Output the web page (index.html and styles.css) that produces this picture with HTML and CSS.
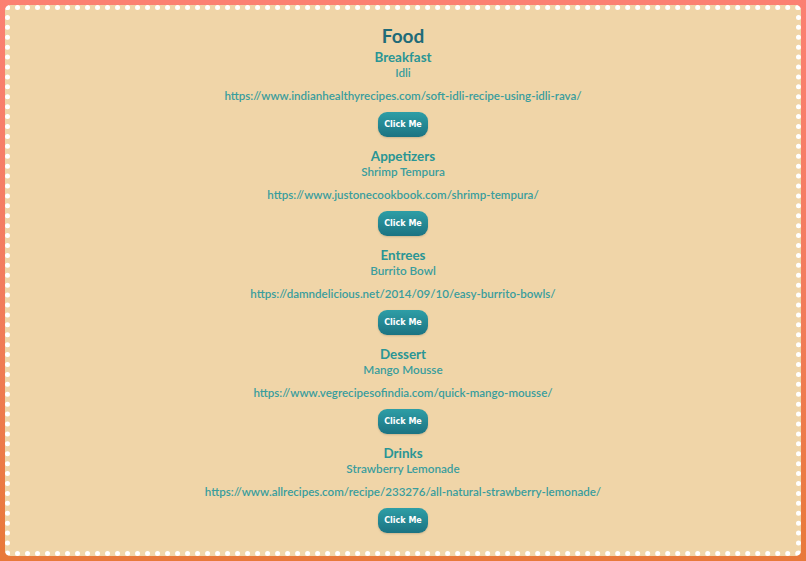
FILE: index.html
```html
<!DOCTYPE html>
<html lang="en">
<head>
<meta charset="utf-8">
<title>Food</title>
<link rel="stylesheet" href="styles.css">
</head>
<body>
<main class="card">
  <h1 class="title">Food</h1>
  <section class="meal">
    <h2 class="meal-name">Breakfast</h2>
    <p class="dish">Idli</p>
    <p class="link">https://www.indianhealthyrecipes.com/soft-idli-recipe-using-idli-rava/</p>
    <button class="btn" type="button">Click Me</button>
  </section>
  <section class="meal">
    <h2 class="meal-name">Appetizers</h2>
    <p class="dish">Shrimp Tempura</p>
    <p class="link">https://www.justonecookbook.com/shrimp-tempura/</p>
    <button class="btn" type="button">Click Me</button>
  </section>
  <section class="meal">
    <h2 class="meal-name">Entrees</h2>
    <p class="dish">Burrito Bowl</p>
    <p class="link">https://damndelicious.net/2014/09/10/easy-burrito-bowls/</p>
    <button class="btn" type="button">Click Me</button>
  </section>
  <section class="meal">
    <h2 class="meal-name">Dessert</h2>
    <p class="dish">Mango Mousse</p>
    <p class="link">https://www.vegrecipesofindia.com/quick-mango-mousse/</p>
    <button class="btn" type="button">Click Me</button>
  </section>
  <section class="meal">
    <h2 class="meal-name">Drinks</h2>
    <p class="dish">Strawberry Lemonade</p>
    <p class="link">https://www.allrecipes.com/recipe/233276/all-natural-strawberry-lemonade/</p>
    <button class="btn" type="button">Click Me</button>
  </section>
</main>
</body>
</html>
```
FILE: styles.css
```css
html {
  min-height: 100%;
  background: linear-gradient(to bottom, #fb8072 0%, #f27c5e 50%, #e8793a 100%);
}
body {
  margin: 5px;
  font-family: Lato, "Noto Sans", sans-serif;
}
.card {
  box-sizing: border-box;
  width: 796px;
  height: 551px;
  background: #f0d5a8;
  border: 5px dotted #ffffff;
  border-radius: 5px;
  padding: 14px 0 18px;
  display: flex;
  flex-direction: column;
  align-items: center;
  text-align: center;
}
.title {
  margin: 0 0 1px;
  font-size: 19px;
  line-height: 24px;
  font-weight: 700;
  color: #1f6b78;
}
.meal {
  display: flex;
  flex-direction: column;
  align-items: center;
  margin-bottom: 11px;
}
.meal:last-child {
  margin-bottom: 0;
}
.meal-name {
  margin: 0;
  font-size: 13.4px;
  line-height: 16px;
  font-weight: 700;
  color: #2a9595;
}
.dish {
  margin: 0;
  font-size: 11.7px;
  line-height: 14px;
  font-weight: 600;
  color: #3a9d9d;
}
.link {
  margin: 10px 0 0;
  font-size: 11.55px;
  line-height: 14px;
  font-weight: 600;
  color: #3a9d9d;
}
.btn {
  margin-top: 9px;
  width: 50px;
  height: 25px;
  padding: 0;
  border: none;
  border-radius: 9px;
  background: linear-gradient(to bottom, #2e9ea6 0%, #1b7382 100%);
  color: #ffffff;
  font-family: "DejaVu Sans", sans-serif;
  font-size: 8px;
  font-weight: 700;
  box-shadow: 0 1px 2px rgba(0, 0, 0, 0.15);
}
```
